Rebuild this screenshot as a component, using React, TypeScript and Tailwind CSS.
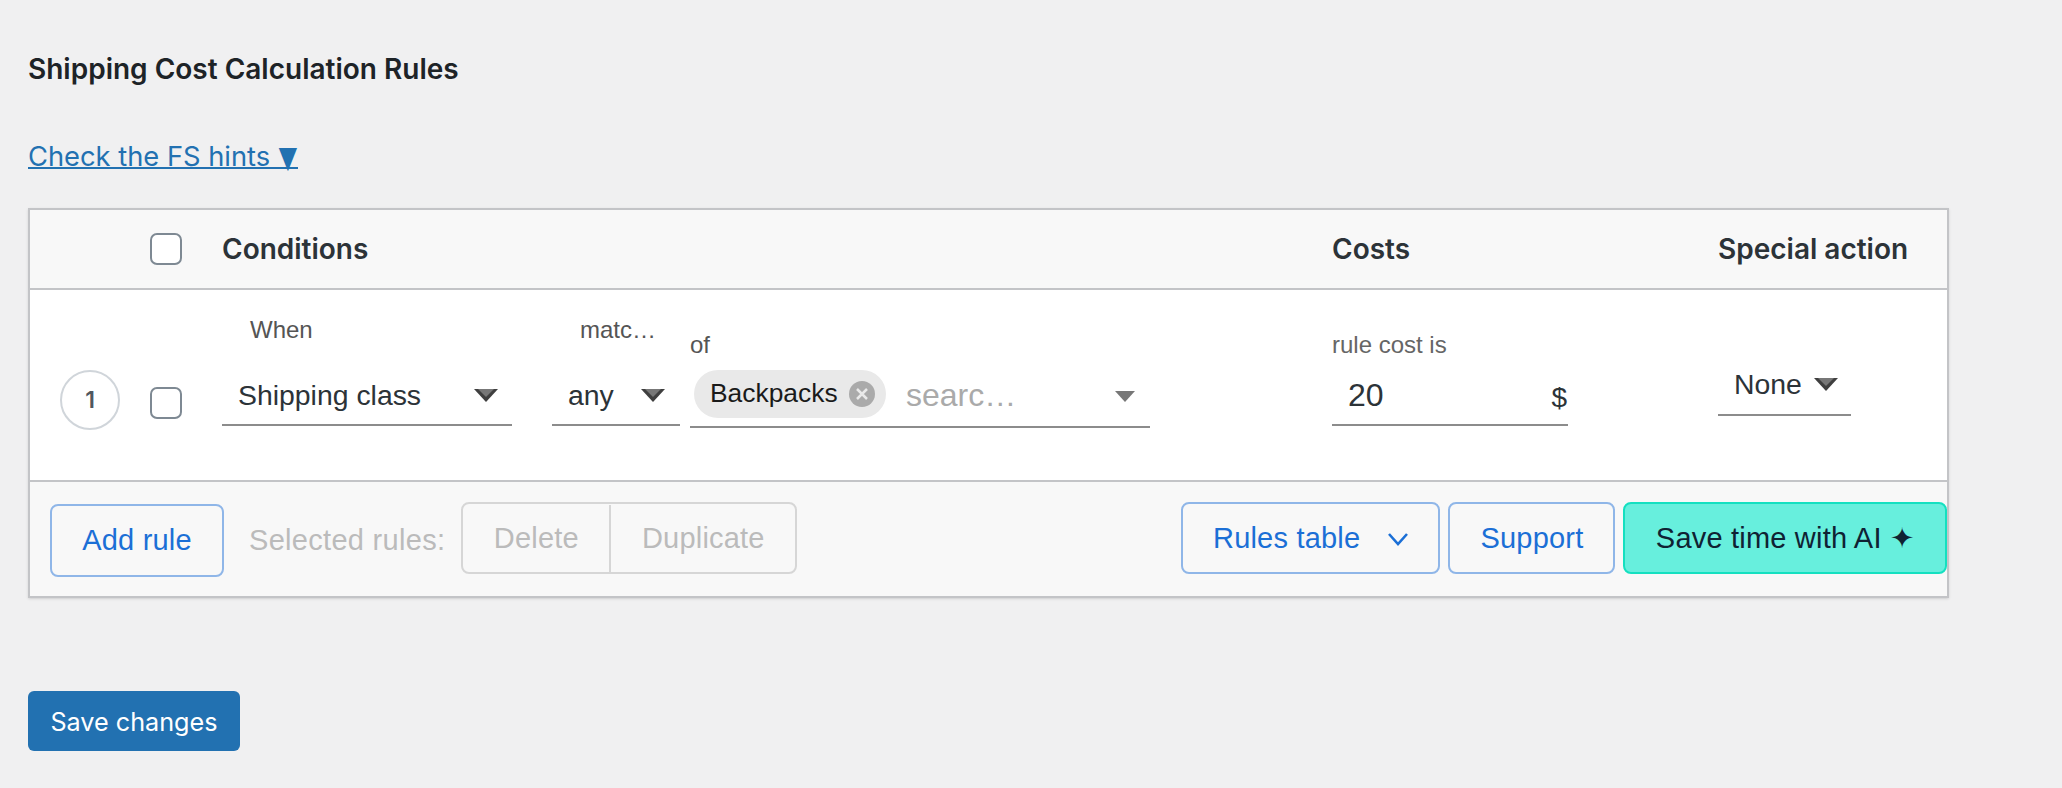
const sans = "font-['Liberation_Sans',Arial,sans-serif]";
const ui = "font-['Inter',sans-serif]";

function Arrow({ className = "" }: { className?: string }) {
  return (
    <svg width="24" height="13" viewBox="0 0 24 13" className={className}>
      <polygon points="0,0 24,0 12,13" fill="#3f3f3f" />
      <polygon points="4,0 20,0 12,8" fill="#777" />
    </svg>
  );
}

function Checkbox({ className = "" }: { className?: string }) {
  return (
    <div className={`h-[32px] w-[32px] rounded-[7px] border-2 border-[#7e8993] bg-white ${className}`} />
  );
}

function Label({ children, className = "" }: { children: React.ReactNode; className?: string }) {
  return <div className={`h-[30px] text-[24px] leading-[30px] text-[#555] ${className}`}>{children}</div>;
}

function OutlineButton({ children, className = "" }: { children: React.ReactNode; className?: string }) {
  return (
    <button
      className={`flex h-[72px] items-center rounded-[8px] border-2 border-[#8fb6e8] text-[29px] tracking-[0.2px] text-[#1b6fd6] ${className}`}
    >
      {children}
    </button>
  );
}

export default function App() {
  return (
    <div className={`min-h-[788px] w-[2062px] bg-[#f0f0f1] pl-[28px] pt-[50px] ${sans}`}>
      <h2 className={`h-[38px] text-[28px] leading-[38px] font-semibold text-[#1d2327] ${ui}`}>
        Shipping Cost Calculation Rules
      </h2>
      <div className="mt-[50px] h-[38px]">
        <a
          href="#"
          className={`inline-block h-[31px] border-b-2 border-[#2271b1] text-[27.3px] leading-[38px] text-[#2271b1] ${ui}`}
        >
          Check the FS hints <span className="inline-block scale-y-150 text-[20px] leading-[20px]">▼</span>
        </a>
      </div>

      <div className="mt-[32px] w-[1921px] border-2 border-[#c3c4c7] shadow-sm">
        <div className={`flex h-[78px] items-center bg-[#f8f8f8] text-[28px] font-semibold text-[#2c3338] ${ui}`}>
          <div className="w-[120px]" />
          <div className="w-[72px]">
            <Checkbox className="bg-transparent" />
          </div>
          <div className="w-[1110px]">Conditions</div>
          <div className="w-[386px]">Costs</div>
          <div>Special action</div>
        </div>

        <div className="flex h-[192px] items-start border-t-2 border-[#c3c4c7] bg-white">
          <div className="w-[120px] pl-[30px] pt-[80px]">
            <div className={`flex h-[60px] w-[60px] items-center justify-center rounded-full border-2 border-[#d0d5da] text-[23px] font-semibold text-[#50575e] ${ui}`}>
              1
            </div>
          </div>
          <div className="w-[72px] pt-[97px]">
            <Checkbox />
          </div>

          <div className="flex w-[1110px] items-start">
            <div className="mt-[25px] w-[290px]">
              <Label className="pl-[28px]">When</Label>
              <div className="mt-[27px] flex h-[54px] items-center border-b-2 border-[#8c8c8c] pb-[6px] pl-[16px] pr-[14px] text-[28.4px] text-[#2c3338]">
                <span className="flex-1">Shipping class</span>
                <Arrow />
              </div>
            </div>
            <div className="ml-[40px] mt-[25px] w-[128px]">
              <Label className="pl-[28px] whitespace-nowrap">matc…</Label>
              <div className="mt-[27px] flex h-[54px] items-center border-b-2 border-[#8c8c8c] pb-[6px] pl-[16px] pr-[15px] text-[28.4px] text-[#2c3338]">
                <span className="flex-1">any</span>
                <Arrow />
              </div>
            </div>
            <div className="ml-[10px] mt-[40px] w-[460px]">
              <Label>of</Label>
              <div className="mt-[10px] flex h-[58px] items-start border-b-2 border-[#8c8c8c] pl-[4px] pr-[15px]">
                <div className="flex h-[48px] w-[192px] items-center rounded-full bg-[#e9e9e9] pl-[16px] text-[26.4px] text-[#1a1a1a]">
                  <span className="w-[139px]">Backpacks</span>
                  <span className="flex h-[26px] w-[26px] items-center justify-center rounded-full bg-[#aaa]">
                    <svg width="14" height="14" viewBox="0 0 14 14">
                      <path d="M2 2 L12 12 M12 2 L2 12" stroke="#e9e9e9" strokeWidth="2.5" />
                    </svg>
                  </span>
                </div>
                <span className="ml-[20px] flex-1 text-[32px] leading-[50px] text-[#aaa]">searc…</span>
                <svg width="20" height="11" viewBox="0 0 20 11" className="mt-[21px]">
                  <polygon points="0,0 20,0 10,11" fill="#777" />
                </svg>
              </div>
            </div>
          </div>

          <div className="mt-[40px] w-[386px]">
            <Label className="text-[24.4px] text-[#666]">rule cost is</Label>
            <div className="mt-[12px] flex h-[54px] w-[236px] items-center border-b-2 border-[#8c8c8c] pb-[6px] pl-[16px] text-[#2c3338]">
              <span className="flex-1 text-[32px]">20</span>
              <span className="mt-[6px] pr-[1px] text-[28px]">$</span>
            </div>
          </div>

          <div className="mt-[72px] flex h-[54px] w-[133px] items-center border-b-2 border-[#8c8c8c] pb-[7px] pl-[16px] text-[28.4px] text-[#2c3338]">
            <span className="flex-1">None</span>
            <Arrow className="mr-[13px]" />
          </div>
        </div>

        <div className="flex h-[116px] items-start border-t-2 border-[#c3c4c7] bg-[#f8f8f8] pl-[20px] pt-[20px]">
          <OutlineButton className="mt-[2px] h-[73px] w-[174px] justify-center">Add rule</OutlineButton>
          <span className="ml-[25px] mt-[20px] text-[29px] leading-[36px] tracking-[0.3px] text-[#bbb]">
            Selected rules:
          </span>
          <div className="ml-[16px] flex h-[72px] w-[336px] rounded-[8px] border-2 border-[#d6d6d6] pt-[1px] text-[29px] tracking-[0.2px] text-[#bbb]">
            <div className="flex w-[148px] items-center justify-center border-r-2 border-[#d6d6d6]">Delete</div>
            <div className="flex flex-1 items-center justify-center">Duplicate</div>
          </div>
          <div className="ml-auto flex gap-[8px]">
            <OutlineButton className="w-[259px] pl-[30px] pt-[2px]">
              <span className="flex-1 text-left">Rules table</span>
              <svg width="22" height="14" viewBox="0 0 22 14" className="mr-[29px]" fill="none">
                <path d="M2 2 L11 12 L20 2" stroke="#1b6fd6" strokeWidth="2.6" />
              </svg>
            </OutlineButton>
            <OutlineButton className="w-[167px] justify-center pl-[1px] pt-[2px]">Support</OutlineButton>
            <button className="flex h-[72px] w-[324px] items-center justify-center rounded-[8px] border-2 border-[#14e0c0] bg-[#67efdd] pt-[2px] text-[29px] tracking-[0.2px] text-[#0f2233]">
              Save time with AI ✦
            </button>
          </div>
        </div>
      </div>

      <button className={`mt-[93px] h-[60px] w-[212px] rounded-[6px] bg-[#2271b1] pt-[3px] text-[25.2px] text-white ${ui}`}>
        Save changes
      </button>
    </div>
  );
}
